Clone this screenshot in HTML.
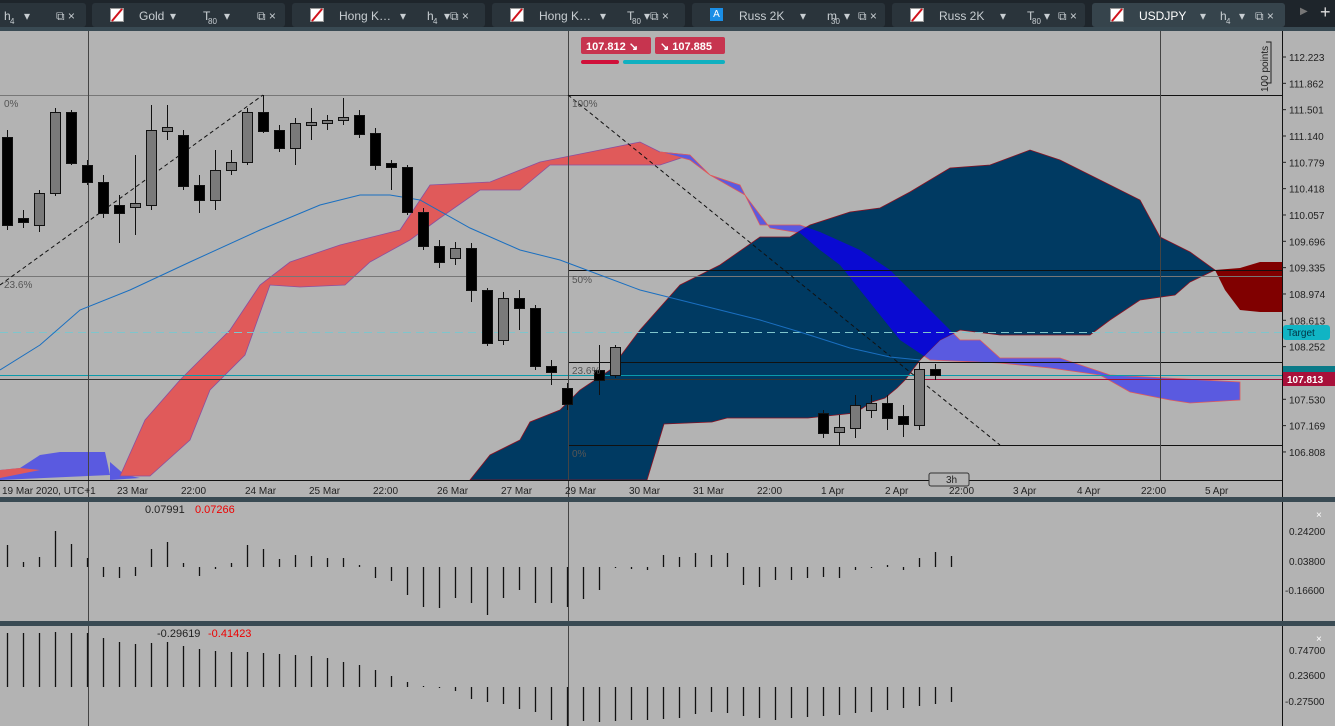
<!DOCTYPE html>
<html><head><meta charset="utf-8"><style>
body{margin:0;width:1335px;height:726px;overflow:hidden;background:#b3b3b3;font-family:"Liberation Sans",sans-serif;}
#top{position:absolute;left:0;top:0;width:1335px;height:31px;background:#1e252b;}
.tab{position:absolute;top:3px;height:24px;background:#2a343b;border-radius:3px;color:#c8ced2;font-size:12px;}
.tab span{position:absolute;top:6px;}
.ic{position:absolute;top:5px;width:12px;height:12px;background:#fff;border:1px solid #999;}
.ic:after{content:"";position:absolute;left:5px;top:-2px;width:2px;height:16px;background:#d0121b;transform:rotate(40deg);}
.sub{font-size:8px;}
#bar2{position:absolute;left:0;top:27px;width:1335px;height:4px;background:#394a53;}
svg{position:absolute;left:0;top:0;}
</style></head><body>
<div id="top">
 <div class="tab" style="left:-4px;width:90px"><span style="left:8px">h</span><span class="sub" style="left:14px;top:14px">4</span><span style="left:28px">▾</span><span style="left:60px">⧉ ×</span></div>
 <div class="tab" style="left:92px;width:193px"><div class="ic" style="left:18px"></div><span style="left:47px">Gold</span><span style="left:78px">▾</span><span style="left:111px">T</span><span class="sub" style="left:116px;top:14px">80</span><span style="left:132px">▾</span><span style="left:165px">⧉ ×</span></div>
 <div class="tab" style="left:292px;width:193px"><div class="ic" style="left:18px"></div><span style="left:47px">Hong K…</span><span style="left:108px">▾</span><span style="left:135px">h</span><span class="sub" style="left:141px;top:14px">4</span><span style="left:152px">▾⧉ ×</span></div>
 <div class="tab" style="left:492px;width:193px"><div class="ic" style="left:18px"></div><span style="left:47px">Hong K…</span><span style="left:108px">▾</span><span style="left:135px">T</span><span class="sub" style="left:140px;top:14px">80</span><span style="left:152px">▾⧉ ×</span></div>
 <div class="tab" style="left:692px;width:193px"><div style="position:absolute;left:18px;top:5px;width:13px;height:13px;background:#1a8ee6;color:#fff;font-size:10px;text-align:center;line-height:13px">A</div><span style="left:47px">Russ 2K</span><span style="left:108px">▾</span><span style="left:135px">m</span><span class="sub" style="left:139px;top:14px">30</span><span style="left:152px">▾</span><span style="left:166px">⧉ ×</span></div>
 <div class="tab" style="left:892px;width:193px"><div class="ic" style="left:18px"></div><span style="left:47px">Russ 2K</span><span style="left:108px">▾</span><span style="left:135px">T</span><span class="sub" style="left:140px;top:14px">80</span><span style="left:152px">▾</span><span style="left:166px">⧉ ×</span></div>
 <div class="tab" style="left:1092px;width:193px;background:#36444c"><div class="ic" style="left:18px"></div><span style="left:47px;color:#fff">USDJPY</span><span style="left:108px">▾</span><span style="left:128px">h</span><span class="sub" style="left:134px;top:14px">4</span><span style="left:147px">▾</span><span style="left:163px">⧉ ×</span></div>
 <span style="position:absolute;left:1300px;top:6px;color:#777;font-size:10px">▶</span><span style="position:absolute;left:1320px;top:2px;color:#ddd;font-size:18px">+</span>
</div>
<div id="bar2"></div>
<svg width="1335" height="726" id="s" font-family="Liberation Sans, sans-serif" font-size="10">
<defs><clipPath id="nv"><polygon id="navyp" points="470,480 490,455 520,440 530,422 560,410 580,390 610,370 640,330 680,285 720,265 760,237 790,237 810,225 850,212 880,208 910,192 950,168 990,165 1030,150 1060,160 1100,180 1140,200 1160,237 1190,252 1215,270 1190,282 1175,295 1140,300 1110,320 1090,335 1000,335 960,330 940,340 920,360 905,380 897,388 885,398 872,402 855,413 808,418 727,418 712,422 664,424 647,480"/></clipPath></defs>
<rect x="0" y="31" width="1282" height="449" fill="#b3b3b3"/>
<polygon points="0,470 20,468 40,455 60,452 105,452 110,475 0,480" fill="#5a5ae0"/>
<polygon points="0,470 20,468 40,470 0,478" fill="#e05a5a"/>
<polygon points="110,462 125,475 140,478 110,480" fill="#5a5ae0"/>
<polygon points="120,476 145,420 180,380 230,330 260,285 290,262 340,245 400,230 430,185 490,182 520,170 540,162 600,150 640,142 660,152 690,155 660,165 630,165 560,165 550,165 520,190 480,190 440,218 410,240 370,262 345,285 300,287 270,285 245,355 210,390 190,440 150,476" fill="#e05a5a" stroke="#8a4fa0" stroke-width="0.8"/>
<polygon id="band" points="660,152 690,155 710,175 740,185 760,225 800,225 820,232 860,250 890,270 910,290 930,310 960,340 980,340 1000,358 1060,358 1110,375 1240,382 1240,400 1190,403 1170,400 1130,392 1100,375 1050,368 1000,363 930,360 900,340 880,315 860,290 840,265 820,250 800,233 770,228 745,195 710,175 690,160" fill="#5a5ae0" stroke="#e05a5a" stroke-width="0.8"/>
<use href="#navyp" fill="#003a62" stroke="#8a1020" stroke-width="0.8"/>
<g clip-path="url(#nv)"><polygon points="780,226 800,225 820,232 860,250 890,270 910,290 930,310 960,340 980,340 1000,358 930,360 900,340 880,315 860,290 840,265 820,250 800,233" fill="#0a0ad2"/></g>
<polygon points="1215,270 1240,268 1260,262 1282,262 1282,312 1260,312 1240,310 1225,290" fill="#800000"/>
<g stroke-width="1">
<line x1="0" y1="95.5" x2="568" y2="95.5" stroke="#777"/><line x1="568" y1="95.5" x2="1282" y2="95.5" stroke="#111"/>
<line x1="0" y1="276.5" x2="1282" y2="276.5" stroke="#777"/><line x1="568" y1="270.5" x2="1282" y2="270.5" stroke="#111"/>
<line x1="568" y1="362.5" x2="1282" y2="362.5" stroke="#111"/>
<line x1="0" y1="379.5" x2="1282" y2="379.5" stroke="#333"/>
<line x1="0" y1="375.5" x2="1282" y2="375.5" stroke="#0a9aaa"/>
<line x1="920" y1="379.5" x2="1282" y2="379.5" stroke="#a0103a"/>
<line x1="0" y1="332.5" x2="1282" y2="332.5" stroke="#7fc5cc" stroke-dasharray="8,5"/>
<line x1="568" y1="445.5" x2="1282" y2="445.5" stroke="#111"/>
<line x1="88.5" y1="31" x2="88.5" y2="726" stroke="#444"/>
<line x1="568.5" y1="31" x2="568.5" y2="726" stroke="#444"/>
<line x1="1160.5" y1="31" x2="1160.5" y2="480" stroke="#444"/>
<line x1="0" y1="285" x2="263" y2="95" stroke="#111" stroke-dasharray="4,3"/>
<line x1="568" y1="95" x2="1000" y2="445" stroke="#111" stroke-dasharray="4,3"/>
</g>
<polyline points="0,370 40,345 80,310 130,290 190,262 260,230 320,205 360,195 390,195 420,200 470,228 520,250 560,260 600,275 640,290 700,305 760,320 800,332 850,348 890,357 920,360" fill="none" stroke="#1a6fc0" stroke-width="1"/>
<g id="cd"></g>
<g fill="#555" font-size="10">
<text x="4" y="107">0%</text><text x="4" y="288">23.6%</text><text x="572" y="107">100%</text><text x="572" y="283">50%</text><text x="572" y="374">23.6%</text><text x="572" y="457">0%</text>
</g>
<rect x="581" y="37" width="70" height="17" rx="2" fill="#c7344f"/><text x="586" y="50" fill="#fff" font-size="11" font-weight="bold">107.812 ↘</text>
<rect x="655" y="37" width="70" height="17" rx="2" fill="#c7344f"/><text x="660" y="50" fill="#fff" font-size="11" font-weight="bold">↘ 107.885</text>
<rect x="581" y="60" width="38" height="4" rx="2" fill="#d0103a"/><rect x="623" y="60" width="102" height="4" rx="2" fill="#10b0c0"/>
<line x1="1282.5" y1="31" x2="1282.5" y2="497" stroke="#111"/>
<line x1="1282.5" y1="502" x2="1282.5" y2="621" stroke="#111"/>
<line x1="1282.5" y1="626" x2="1282.5" y2="726" stroke="#111"/>
<g id="ax" fill="#222" font-size="10"></g>
<path d="M1266 42h5v41h-5" fill="none" stroke="#222"/><text transform="translate(1268,92) rotate(-90)" font-size="10" fill="#222">100 points</text>
<rect x="1283" y="325" width="47" height="15" rx="3" fill="#10b4c4"/><text x="1287" y="336" fill="#034" font-size="10">Target</text>
<rect x="1283" y="366" width="52" height="8" fill="#0a7a88"/>
<rect x="1283" y="372" width="52" height="14" fill="#a8103a"/><text x="1287" y="383" fill="#fff" font-size="10" font-weight="bold">107.813</text>
<line x1="0" y1="480.5" x2="1282" y2="480.5" stroke="#111"/>
<g id="dt" fill="#222" font-size="10"></g>
<rect x="929" y="473" width="40" height="13" rx="2" fill="#b3b3b3" stroke="#333"/><text x="946" y="483" font-size="10" fill="#222">3h</text>
<rect x="0" y="497" width="1335" height="5" fill="#394a53"/>
<rect x="0" y="621" width="1335" height="5" fill="#394a53"/>
<text x="145" y="513" fill="#222" font-size="11">0.07991</text><text x="195" y="513" fill="#e00" font-size="11">0.07266</text>
<text x="157" y="637" fill="#222" font-size="11">-0.29619</text><text x="208" y="637" fill="#e00" font-size="11">-0.41423</text>
<text x="1316" y="518" fill="#fff" font-size="10">×</text><text x="1316" y="642" fill="#fff" font-size="10">×</text>
<text x="1289" y="535" fill="#222">0.24200</text><text x="1289" y="565" fill="#222">0.03800</text><text x="1285" y="594" fill="#222">-0.16600</text>
<text x="1289" y="654" fill="#222">0.74700</text><text x="1289" y="679" fill="#222">0.23600</text><text x="1285" y="705" fill="#222">-0.27500</text>
<g id="h" stroke="#111" stroke-width="1.3"></g>
</svg>
<script>
var ns="http://www.w3.org/2000/svg";
function el(p,t,a,tx){var e=document.createElementNS(ns,t);for(var k in a)e.setAttribute(k,a[k]);if(tx)e.textContent=tx;document.getElementById(p).appendChild(e);}
var C=[[7,137,225,130,230,1],[23,218,222,210,228,1],[39,193,225,190,232,0],[55,112,193,108,196,0],[71,112,163,110,165,1],[87,165,182,160,185,1],[103,182,213,175,218,1],[119,205,213,195,243,1],[135,203,207,155,235,0],[151,130,205,105,210,0],[167,127,131,105,140,0],[183,135,186,130,190,1],[199,185,200,175,213,1],[215,170,200,150,210,0],[231,162,170,150,175,0],[247,112,162,108,165,0],[263,112,131,95,133,1],[279,130,148,125,152,1],[295,123,148,118,165,0],[311,122,125,108,140,0],[327,120,123,115,130,0],[343,117,120,98,125,0],[359,115,134,110,138,1],[375,133,165,128,170,1],[391,163,167,160,190,1],[407,167,212,165,215,1],[423,212,246,208,250,1],[439,246,262,240,268,1],[455,248,258,242,265,0],[471,248,290,243,302,1],[487,290,343,288,346,1],[503,298,340,292,345,0],[519,298,308,290,330,1],[535,308,366,305,370,1],[551,366,372,360,385,1],[567,388,404,383,410,1],[599,370,380,345,395,1],[615,347,375,345,378,0],[823,413,433,410,438,1],[839,427,432,415,445,0],[855,405,428,395,438,0],[871,403,410,395,418,0],[887,403,418,395,430,1],[903,416,424,405,437,1],[919,369,425,362,430,0],[935,369,375,364,380,1]];
C.forEach(function(c){el("cd","line",{x1:c[0]+.5,x2:c[0]+.5,y1:c[3],y2:c[4],stroke:"#111"});el("cd","rect",{x:c[0]-4.5,y:c[1]+.5,width:10,height:Math.max(1,c[2]-c[1]),fill:c[5]?"#000":"#7a7a7a",stroke:"#111"});});
var A=["112.223","111.862","111.501","111.140","110.779","110.418","110.057","109.696","109.335","108.974","108.613","108.252","","107.530","107.169","106.808"];
A.forEach(function(t,i){var y=57+i*26.33;el("ax","line",{x1:1282,x2:1286,y1:y,y2:y,stroke:"#222"});if(t)el("ax","text",{x:1289,y:y+4},t);});
var D=[[2,"19 Mar 2020, UTC+1"],[117,"23 Mar"],[181,"22:00"],[245,"24 Mar"],[309,"25 Mar"],[373,"22:00"],[437,"26 Mar"],[501,"27 Mar"],[565,"29 Mar"],[629,"30 Mar"],[693,"31 Mar"],[757,"22:00"],[821,"1 Apr"],[885,"2 Apr"],[949,"22:00"],[1013,"3 Apr"],[1077,"4 Apr"],[1141,"22:00"],[1205,"5 Apr"]];
D.forEach(function(d){el("dt","text",{x:d[0],y:494},d[1]);});
var H1=[545,562,557,531,544,558,577,578,576,549,542,563,576,569,563,545,549,559,555,556,558,558,565,578,581,595,607,608,598,603,615,598,590,603,603,607,599,590,568,569,570,555,557,553,555,553,585,587,580,580,578,577,578,570,568,565,570,558,552,556];
H1.forEach(function(v,i){var x=7+i*16+.5;el("h","line",{x1:x,x2:x,y1:567,y2:v});});
var H2=[633,633,633,632,633,633,638,642,644,643,642,646,649,651,652,652,653,654,655,656,658,662,665,670,676,682,686,688,691,699,702,704,709,712,720,726,721,722,721,720,720,719,718,714,712,713,716,718,720,718,717,716,715,713,712,710,708,706,704,702];
H2.forEach(function(v,i){var x=7+i*16+.5;el("h","line",{x1:x,x2:x,y1:687,y2:v});});
</script>
</body></html>
